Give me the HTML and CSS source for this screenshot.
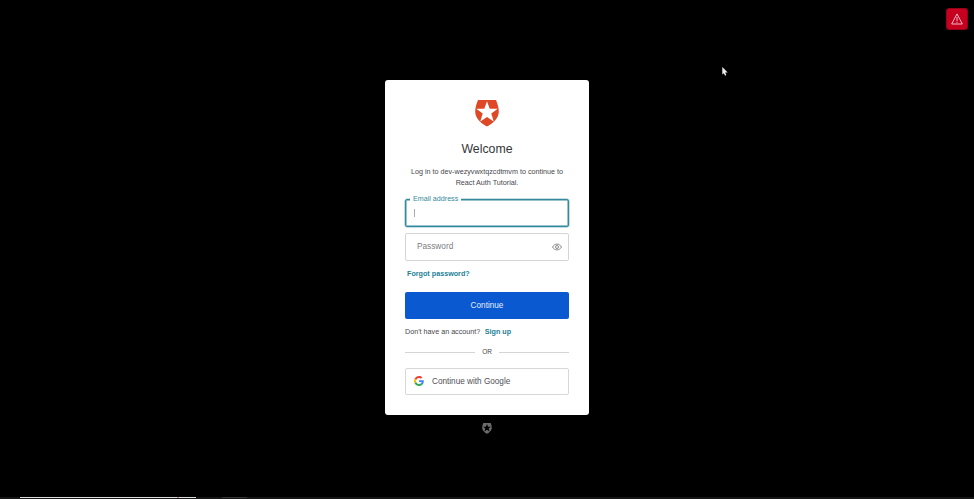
FILE: index.html
```html
<!DOCTYPE html>
<html lang="en">
<head>
<meta charset="utf-8">
<title>Log in</title>
<link rel="stylesheet" href="styles.css">
</head>
<body>
<main class="page">
  <section class="card">
    <svg class="logo" viewBox="0 0 24 27" preserveAspectRatio="none"><path fill="#df4826" d="M3 0h18c1.800 4.200 3.600 10.500 2.400 14.600C22 20 17 24 12 26.600 7 24 2 20 .6 14.600-.6 10.500 1.200 4.200 3 0z"/><path fill="#fff" d="M12 1.200l2.700 7.600h8L16.300 13.600l2.400 8L12 17l-6.700 4.600 2.400-8L1.300 8.800h8z"/></svg>
    <h1 class="title">Welcome</h1>
    <p class="intro">Log in to dev-wezyvwxtqzcdtmvm to continue to<br>React Auth Tutorial.</p>
    <form class="form">
      <div class="field field-active"><label class="field-label">Email address</label><span class="caret"></span></div>
      <div class="field field-password"><span>Password</span>
        <svg class="eye" viewBox="0 0 10 8" fill="none" stroke="#7c7c80" stroke-width=".9"><path d="M.5 4C2.700.1 7.300.1 9.500 4 7.300 7.900 2.700 7.900.5 4z"/><circle cx="5" cy="4" r="1.500"/></svg>
      </div>
      <a class="link forgot">Forgot password?</a>
      <button class="continue" type="button">Continue</button>
    </form>
    <p class="signup">Don't have an account?<a class="link signup-link">Sign up</a></p>
    <div class="divider"><span>OR</span></div>
    <button class="google" type="button">
      <svg class="google-icon" viewBox="0 0 48 48"><path fill="#ea4335" d="M24 9.500c3.500 0 6.700 1.200 9.200 3.600l6.900-6.900C35.900 2.400 30.500 0 24 0 14.600 0 6.500 5.400 2.600 13.200l8 6.200C12.400 13.700 17.700 9.500 24 9.500z"/><path fill="#4285f4" d="M47 24.600c0-1.600-.2-3.100-.4-4.600H24v9h12.900c-.6 3-2.200 5.500-4.700 7.200l7.700 6C44.400 38 47 31.800 47 24.600z"/><path fill="#fbbc05" d="M10.500 28.600a14.500 14.500 0 0 1 0-9.200l-8-6.200a24 24 0 0 0 0 21.600z"/><path fill="#34a853" d="M24 48c6.500 0 11.900-2.100 15.900-5.800l-7.700-6c-2.200 1.500-4.900 2.300-8.200 2.300-6.300 0-11.600-4.200-13.500-9.900l-8 6.200C6.500 42.600 14.600 48 24 48z"/></svg>
      <span>Continue with Google</span>
    </button>
  </section>
  <svg class="badge" viewBox="0 0 24 27"><path fill="#6c6c6c" d="M3 0h18c1.800 4.200 3.600 10.500 2.400 14.600C22 20 17 24 12 26.600 7 24 2 20 .6 14.600-.6 10.500 1.200 4.200 3 0z"/><path fill="#000" d="M12 2.500l2.600 6.500h7L16 13.400l2.400 7.200L12 16.600l-6.400 4 2.400-7.200L2.400 9h7z"/></svg>
</main>
<div class="alert"><svg viewBox="0 0 12 12" fill="none" stroke="#f3bcc5" stroke-width="1"><path d="M6 .9L11.300 11H.7zM6 4v4M6 8.800v1"/></svg></div>
<svg class="pointer" viewBox="0 0 6 9"><path fill="#eee" d="M.3 0v7.500l1.500-1.300 1.300 2.500 1.200-.6L3.200 5.600h2.500z"/></svg>
<div class="strip"><span class="strip-light"></span><span class="strip-mark"></span><span class="strip-end"></span><span class="strip-gap"></span><span class="strip-dim"></span></div>
</body>
</html>
```
FILE: styles.css
```css
* { box-sizing: border-box; }
body { margin: 0; height: 499px; overflow: hidden; background: #000; font-family: "Liberation Sans", Arial, sans-serif; color: #47474c; }
svg { display: block; }
.page { display: flex; flex-direction: column; align-items: center; padding-top: 80px; }
.card { width: 204px; height: 335px; padding: 20px 20px 0; background: #fff; border-radius: 3px; display: flex; flex-direction: column; }
.logo { width: 24px; height: 27px; align-self: center; }
.title { margin: 14px 0 0; font-size: 12.300px; line-height: 17px; font-weight: 400; text-align: center; color: #36363a; }
.intro { margin: 8px -10px 0; font-size: 7.200px; line-height: 11px; text-align: center; white-space: nowrap; }
.form { display: flex; flex-direction: column; margin-top: 11px; }
.field { position: relative; height: 28px; border: 1px solid #d5d5d8; border-radius: 2px; display: flex; align-items: center; justify-content: space-between; font-size: 8.250px; color: #7c7c80; }
.field-active { border-color: #35899c; box-shadow: inset 0 0 0 .5px #35899c, 0 0 0 .5px #8dbdc8; }
.field-label { position: absolute; top: -6px; left: 4px; padding: 0 3px; background: #fff; color: #35899c; font-size: 7.150px; line-height: 10px; white-space: nowrap; }
.caret { width: 1px; height: 8px; margin-left: 8px; background: #aaa; }
.field-password { margin-top: 6px; padding: 0 6px 1px 11px; }
.eye { width: 10px; height: 8px; }
.link { color: #1c7f96; font-weight: 700; }
.forgot { margin: 8px 0 0 2px; font-size: 7.200px; line-height: 10px; }
.continue { height: 27px; margin-top: 13px; padding: 0 0 1px; border: 0; border-radius: 2px; background: #0a59d1; color: #e5eefb; font: 8.200px "Liberation Sans", Arial, sans-serif; }
.signup { margin: 7px 0 0; font-size: 7.200px; line-height: 11px; white-space: nowrap; }
.signup-link { margin-left: 4.500px; }
.divider { display: flex; align-items: center; gap: 7px; margin-top: 9px; font-size: 6.500px; line-height: 12px; }
.divider::before, .divider::after { content: ""; flex: 1; height: 1px; background: #d5d5d5; }
.google { display: flex; align-items: center; gap: 8px; height: 27px; margin-top: 10px; padding: 0 8px 1px; border: 1px solid #d8d8d6; border-radius: 2px; background: #fff; color: #505056; font: 8.200px "Liberation Sans", Arial, sans-serif; }
.google-icon { width: 10px; height: 10px; }
.badge { width: 10px; height: 11px; margin-top: 8px; }
.alert { position: absolute; right: 6px; top: 8px; width: 22px; height: 22px; border: 1px solid #960018; border-radius: 3px; background: #c6001f; display: grid; place-items: center; }
.alert svg { width: 12px; height: 12px; }
.pointer { position: absolute; left: 722px; top: 67px; width: 6px; height: 9px; }
.strip { position: absolute; left: 0; right: 0; bottom: 0; height: 2px; background: #151515; display: flex; padding-left: 20px; }
.strip-light { width: 157px; background: linear-gradient(#ddd 50%, #111 50%); background: #ddd; height: 1px; }
.strip-mark { width: 2px; height: 1px; background: #b98a8a; }
.strip-end { width: 17px; height: 1px; background: #ddd; }
.strip-gap { width: 26px; }
.strip-dim { width: 25px; height: 1px; background: #353535; }
```
